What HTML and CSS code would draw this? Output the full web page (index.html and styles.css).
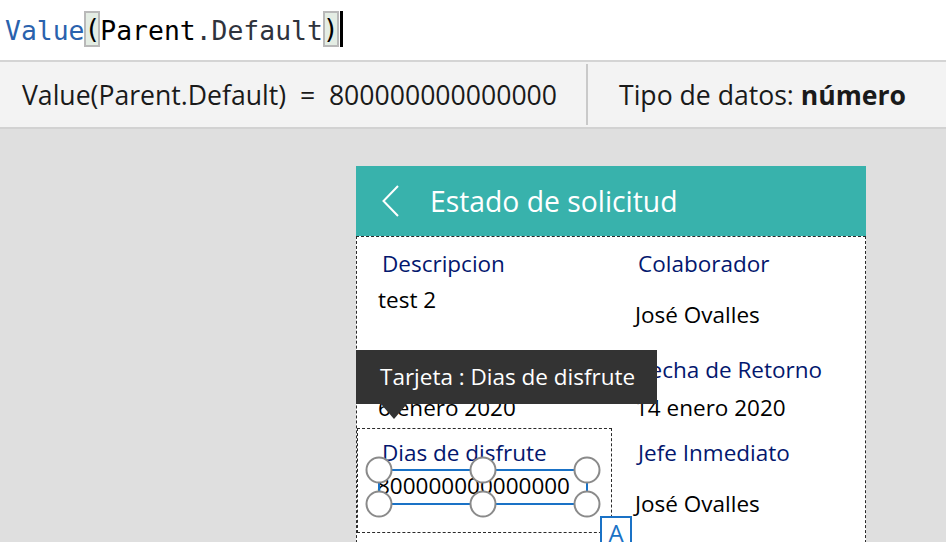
FILE: index.html
```html
<!DOCTYPE html>
<html lang="es">
<head>
<meta charset="utf-8">
<title>Estado de solicitud</title>
<link rel="stylesheet" href="styles.css">
</head>
<body>
<div class="formula"><span class="fn">Value</span><span class="paren">(</span><span class="id">Parent</span><span class="prop">.Default</span><span class="paren">)</span><span class="cursor"></span></div>
<div class="result">
  <div class="res-left">Value(Parent.Default)  =  800000000000000</div>
  <div class="vsep"></div>
  <div class="res-right">Tipo de datos: <b>número</b></div>
</div>
<div class="canvas">
  <div class="screen">
    <div class="header">
      <svg class="back" width="17" height="32" viewBox="0 0 17 32"><polyline points="16,1 1.5,16 16,31" fill="none" stroke="#fff" stroke-width="2"/></svg>
      <span class="title">Estado de solicitud</span>
    </div>
    <div class="form">
      <div class="card row1 left">
        <div class="lbl">Descripcion</div>
        <div class="val v-test">test 2</div>
      </div>
      <div class="card row1 right">
        <div class="lbl">Colaborador</div>
        <div class="val v-colab">José Ovalles</div>
      </div>
      <div class="card row2 left">
        <div class="lbl">Fecha de Inicio</div>
        <div class="val v-date">6 enero 2020</div>
      </div>
      <div class="card row2 right">
        <div class="lbl">Fecha de Retorno</div>
        <div class="val v-date">14 enero 2020</div>
      </div>
      <div class="card row3 left selected">
        <div class="lbl">Dias de disfrute</div>
        <div class="val v-num">800000000000000</div>
        <svg class="handles" width="252" height="104" viewBox="0 0 252 104">
          <rect x="21" y="41" width="208" height="34" fill="none" stroke="#1a72c6" stroke-width="2"/>
          <circle cx="21" cy="41" r="12.5" fill="#fff" stroke="#8a8a8a" stroke-width="2"/>
          <circle cx="125" cy="41" r="12.5" fill="#fff" stroke="#8a8a8a" stroke-width="2"/>
          <circle cx="229" cy="41" r="12.5" fill="#fff" stroke="#8a8a8a" stroke-width="2"/>
          <circle cx="21" cy="75" r="12.5" fill="#fff" stroke="#8a8a8a" stroke-width="2"/>
          <circle cx="125" cy="75" r="12.5" fill="#fff" stroke="#8a8a8a" stroke-width="2"/>
          <circle cx="229" cy="75" r="12.5" fill="#fff" stroke="#8a8a8a" stroke-width="2"/>
        </svg>
        <div class="badge">A</div>
      </div>
      <div class="card row3 right">
        <div class="lbl">Jefe Inmediato</div>
        <div class="val v-jefe">José Ovalles</div>
      </div>
      <div class="tooltip">Tarjeta : Dias de disfrute</div>
    </div>
  </div>
</div>
</body>
</html>
```

FILE: styles.css
```css
html, body {
  margin: 0;
  padding: 0;
}
body {
  width: 946px;
  height: 542px;
  overflow: hidden;
  background: #dfdfdf;
  font-family: "Open Sans", "Noto Sans", sans-serif;
  color: #111;
}

/* formula bar */
.formula {
  height: 47px;
  padding: 13px 0 0 5px;
  background: #fff;
  border-bottom: 2px solid #d4d4d4;
  font-family: "DejaVu Sans Mono", "Liberation Mono", monospace;
  font-size: 26.4px;
  line-height: 36px;
  white-space: pre;
}
.formula span {
  vertical-align: top;
}
.fn { color: #2a62ad; }
.id { color: #000; }
.prop { color: #2f333d; }
.paren {
  display: inline-block;
  height: 36px;
  margin-top: -2px;
  background: #e4ede4;
  box-shadow: inset 0 0 0 2px #b9b9b9;
  color: #000;
}
.cursor {
  display: inline-block;
  width: 3px;
  height: 36px;
  margin-top: -2px;
  margin-left: 1px;
  background: #000;
}

/* result bar */
.result {
  height: 65px;
  display: flex;
  align-items: center;
  background: #f3f3f3;
  border-bottom: 2px solid #d2d2d2;
  font-size: 26.6px;
  color: #1a1a1a;
}
.res-left {
  width: 564px;
  padding-left: 22px;
  white-space: pre;
}
.vsep {
  width: 2px;
  height: 61px;
  background: #c9c9c9;
}
.res-right {
  padding-left: 31px;
}
.res-right b {
  font-weight: 700;
}

/* canvas */
.canvas {
  padding: 37px 0 0 356px;
}
.screen {
  width: 510px;
}
.header {
  height: 70px;
  background: #38b2ac;
  display: flex;
  align-items: center;
  padding-left: 26px;
}
.back {
  display: block;
}
.title {
  margin-left: 31px;
  color: #fff;
  font-size: 28.3px;
  line-height: 38px;
}

.form {
  position: relative;
  height: 320px;
  background: #fff;
  border: 1px dashed #2a2a2a;
  display: grid;
  grid-template-columns: 255px 1fr;
  grid-template-rows: 113px 78px 105px;
  align-content: start;
}
.card {
  box-sizing: border-box;
  position: relative;
}
.lbl {
  color: #03176e;
  font-size: 22.5px;
  line-height: 30px;
  white-space: nowrap;
}
.val {
  color: #000;
  font-size: 22.5px;
  line-height: 30px;
  white-space: nowrap;
}
.left .lbl { padding-left: 25px; }
.left .val { padding-left: 21px; }
.right .lbl { padding-left: 26px; }
.right .val { padding-left: 23px; }

.row1 {
  padding-top: 12px;
}
.v-test { margin-top: 6px; }
.v-colab { margin-top: 21px; }

.row2 {
  padding-top: 5px;
}
.v-date { margin-top: 8px; }

.row3 {
  padding-top: 10px;
}
.selected {
  border: 1px dashed #2a2a2a;
  padding-top: 9px;
}
.selected .lbl { padding-left: 24px; }
.selected .val { padding-left: 19px; }
.v-num { margin-top: 3px; }
.v-jefe { margin-top: 21px; }

.handles {
  position: absolute;
  left: 0;
  top: 0;
  overflow: visible;
}
.badge {
  position: absolute;
  left: 242px;
  top: 87px;
  width: 32px;
  height: 32px;
  box-sizing: border-box;
  border: 2px solid #1a72c6;
  background: #fff;
  color: #1a72c6;
  font-size: 24px;
  line-height: 30px;
  text-align: center;
  z-index: 1;
}

.tooltip {
  position: absolute;
  left: -1px;
  top: 113px;
  width: 301px;
  height: 54px;
  box-sizing: border-box;
  padding-left: 24px;
  background: #333333;
  color: #fff;
  font-size: 22.5px;
  line-height: 54px;
  white-space: nowrap;
  z-index: 3;
}
.tooltip::after {
  content: "";
  position: absolute;
  left: 25px;
  top: 54px;
  border-left: 13px solid transparent;
  border-right: 13px solid transparent;
  border-top: 15px solid #333333;
}
```
